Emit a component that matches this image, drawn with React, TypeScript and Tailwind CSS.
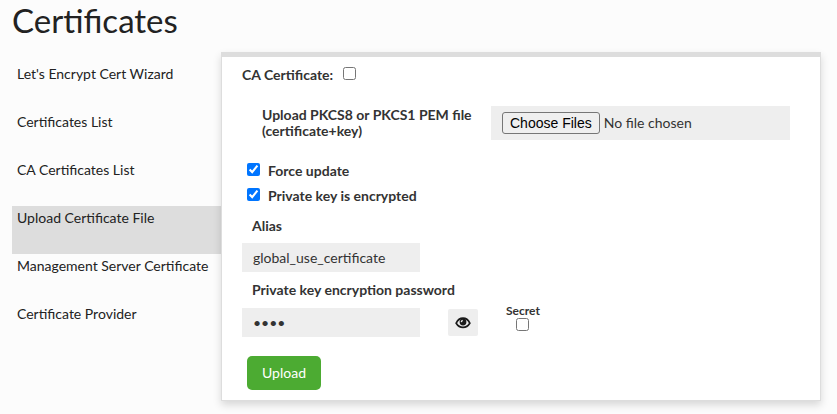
import React, { useState } from 'react';

const navItems = [
  { id: 'lets-encrypt', label: "Let's Encrypt Cert Wizard" },
  { id: 'list', label: 'Certificates List' },
  { id: 'ca-list', label: 'CA Certificates List' },
  { id: 'upload', label: 'Upload Certificate File' },
  { id: 'server', label: 'Management Server Certificate' },
  { id: 'provider', label: 'Certificate Provider' },
];

const EyeIcon: React.FC = () => (
  <svg viewBox="0 0 16 12" className="w-4 h-3" aria-hidden="true">
    <path d="M1.2 6.2C2.6 3.2 5 1.2 8 1.2S13.4 3.2 14.8 6.2C13.2 8.8 11 10.4 8 10.4S2.8 8.8 1.2 6.2Z" fill="none" stroke="#1a1a1a" strokeWidth="1.7" />
    <circle cx="8" cy="5" r="3.4" fill="#1a1a1a" />
    <path d="M7.7 3.3A2 2 0 0 0 6.3 5.1" fill="none" stroke="#eee" strokeWidth="1.3" />
  </svg>
);

export default function App() {
  const [currentTab, setCurrentTab] = useState('upload');
  const [showPassword, setShowPassword] = useState(false);

  return (
    <div className="min-h-screen bg-[#fcfcfc] pl-3 pr-4 pb-3 font-['Lato',sans-serif] text-sm text-[#222]">
      <h1 className="text-[33px] leading-10">Certificates</h1>

      <div className="flex items-start pt-3">
        {/* Section navigation */}
        <nav className="w-[209px] shrink-0 pt-2.5">
          {navItems.map((item) => (
            <a
              key={item.id}
              href={`#${item.id}`}
              onClick={() => setCurrentTab(item.id)}
              className={`block h-12 pl-[5px] pt-0.5 whitespace-nowrap ${
                currentTab === item.id ? 'bg-[#ddd]' : ''
              }`}
            >
              {item.label}
            </a>
          ))}
        </nav>

        {/* Upload form */}
        <form
          onSubmit={(e) => e.preventDefault()}
          className="flex-1 min-w-0 border border-t-[5px] border-[#ddd] bg-white px-5 pt-2 pb-2.5 font-bold text-[#333] shadow-[0_4px_8px_rgba(0,0,0,0.15)]"
        >
          <div className="flex items-center gap-2.5">
            <label htmlFor="ca">CA Certificate:</label>
            <input id="ca" type="checkbox" className="size-[13px] mb-1" />
          </div>

          <div className="mt-[21px] flex pl-5">
            <label htmlFor="pem" className="w-[229px] shrink-0 pt-px leading-4">
              Upload PKCS8 or PKCS1 PEM file (certificate+key)
            </label>
            <input
              id="pem"
              type="file"
              multiple
              className="h-[34px] w-[299px] bg-[#eee] px-[11px] py-1.5 font-normal file:mr-1 file:h-[22px] file:rounded-[3px] file:border file:border-solid file:border-[#767676] file:bg-[#efefef] file:px-[7px] file:font-['Liberation_Sans',sans-serif] file:text-sm file:leading-5 file:text-black"
            />
          </div>

          <div className="mt-[21px] flex flex-col gap-[5px] pl-[5px]">
            <label className="flex items-center gap-2">
              <input type="checkbox" defaultChecked className="size-[13px] mb-1" />
              Force update
            </label>
            <label className="flex items-center gap-2">
              <input type="checkbox" defaultChecked className="size-[13px] mb-1" />
              Private key is encrypted
            </label>
          </div>

          <label htmlFor="alias" className="mt-2.5 block pl-2.5">Alias</label>
          <input
            id="alias"
            type="text"
            defaultValue="global_use_certificate"
            className="mt-[7px] block h-[29px] w-[178px] bg-[#eee] px-[11px] font-normal"
          />

          <label htmlFor="password" className="mt-2 block pl-2.5">Private key encryption password</label>
          <div className="mt-2 flex items-start">
            <input
              id="password"
              type={showPassword ? 'text' : 'password'}
              defaultValue="cert"
              className="h-[29px] w-[178px] bg-[#eee] px-[11px] font-normal"
            />
            <button
              type="button"
              aria-label="Show password"
              onClick={() => setShowPassword(!showPassword)}
              className="ml-7 mt-px flex h-[27px] w-[30px] items-center justify-center rounded-xs bg-[#eee]"
            >
              <EyeIcon />
            </button>
            <label className="ml-7 -mt-1 flex flex-col items-center text-xs leading-[14px]">
              Secret
              <input type="checkbox" className="size-[13px]" />
            </label>
          </div>

          <button
            type="submit"
            className="ml-[5px] mt-[19px] h-[34px] rounded-[5px] bg-[#4cab32] px-[15px] font-normal text-white"
          >
            Upload
          </button>
        </form>
      </div>
    </div>
  );
}
